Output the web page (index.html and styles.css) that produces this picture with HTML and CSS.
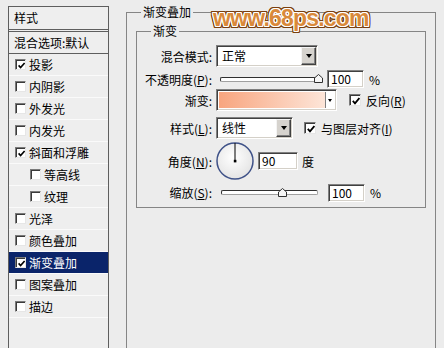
FILE: index.html
```html
<!DOCTYPE html>
<html lang="zh-CN">
<head>
<meta charset="utf-8">
<title>图层样式</title>
<link rel="stylesheet" href="styles.css">
</head>
<body>
<div class="dialog">
  <div class="styles-list">
    <div class="list-head">样式</div>
    <div class="list-blend">混合选项:默认</div>
    <div class="item"><span class="cb"><svg width="7" height="7" viewBox="0 0 7 7"><path d="M0.6 3.4 L2.6 5.6 L6.6 1" fill="none" stroke="#000" stroke-width="1.6"/></svg></span>投影</div>
    <div class="item"><span class="cb"></span>内阴影</div>
    <div class="item"><span class="cb"></span>外发光</div>
    <div class="item"><span class="cb"></span>内发光</div>
    <div class="item"><span class="cb"><svg width="7" height="7" viewBox="0 0 7 7"><path d="M0.6 3.4 L2.6 5.6 L6.6 1" fill="none" stroke="#000" stroke-width="1.6"/></svg></span>斜面和浮雕</div>
    <div class="item sub"><span class="cb"></span>等高线</div>
    <div class="item sub"><span class="cb"></span>纹理</div>
    <div class="item"><span class="cb"></span>光泽</div>
    <div class="item"><span class="cb"></span>颜色叠加</div>
    <div class="item sel"><span class="cb"><svg width="7" height="7" viewBox="0 0 7 7"><path d="M0.6 3.4 L2.6 5.6 L6.6 1" fill="none" stroke="#000" stroke-width="1.6"/></svg></span>渐变叠加</div>
    <div class="item"><span class="cb"></span>图案叠加</div>
    <div class="item"><span class="cb"></span>描边</div>
  </div>

  <fieldset class="outer">
    <legend>渐变叠加</legend>
    <fieldset class="inner">
      <legend>渐变</legend>

      <div class="row r1">
        <span class="lbl">混合模式:</span>
        <div class="select sel-blend"><span class="sel-text">正常</span><span class="sel-btn"><span class="tri"></span></span></div>
      </div>

      <div class="row r2">
        <span class="lbl">不透明度(<u>P</u>):</span>
        <div class="slider sl-opacity">
          <div class="track"></div>
          <svg class="thumb" style="left:94px" width="9" height="9" viewBox="0 0 9 9"><path d="M0.5 8.5 V4 L4.5 0.5 L8.5 4 V8.5 Z" fill="#f6f6f6" stroke="#303030"/></svg>
        </div>
        <div class="num num-opacity">100</div>
        <span class="unit">%</span>
      </div>

      <div class="row r3">
        <span class="lbl">渐变:</span>
        <div class="grad"><div class="grad-fill"></div><div class="grad-arrow"><span class="tri small"></span></div></div>
        <span class="cbx cbx-rev"><svg width="8" height="8" viewBox="0 0 8 8"><path d="M0.8 3.8 L3 6.4 L7.4 1" fill="none" stroke="#000" stroke-width="1.8"/></svg></span>
        <span class="cb-label">反向(<u>R</u>)</span>
      </div>

      <div class="row r4">
        <span class="lbl">样式(<u>L</u>):</span>
        <div class="select sel-style"><span class="sel-text">线性</span><span class="sel-btn"><span class="tri"></span></span></div>
        <span class="cbx cbx-align"><svg width="8" height="8" viewBox="0 0 8 8"><path d="M0.8 3.8 L3 6.4 L7.4 1" fill="none" stroke="#000" stroke-width="1.8"/></svg></span>
        <span class="cb-label">与图层对齐(<u>I</u>)</span>
      </div>

      <div class="row r5">
        <span class="lbl">角度(<u>N</u>):</span>
        <svg class="dial" width="38" height="40" viewBox="0 0 38 40">
          <defs>
            <radialGradient id="dialfill" cx="45%" cy="40%" r="65%">
              <stop offset="0" stop-color="#ffffff"/>
              <stop offset="1" stop-color="#e2e2e2"/>
            </radialGradient>
          </defs>
          <circle cx="19" cy="20" r="18" fill="url(#dialfill)" stroke="#3f5288" stroke-width="1.5"/>
          <line x1="19" y1="20" x2="19" y2="2" stroke="#000" stroke-width="1"/>
          <rect x="17.8" y="18.8" width="2.6" height="2.6" fill="#000"/>
        </svg>
        <div class="num num-angle">90</div>
        <span class="unit deg">度</span>
      </div>

      <div class="row r6">
        <span class="lbl">缩放(<u>S</u>):</span>
        <div class="slider sl-scale">
          <div class="track"></div>
          <svg class="thumb" style="left:57px" width="9" height="9" viewBox="0 0 9 9"><path d="M0.5 8.5 V4 L4.5 0.5 L8.5 4 V8.5 Z" fill="#f6f6f6" stroke="#303030"/></svg>
        </div>
        <div class="num num-scale">100</div>
        <span class="unit">%</span>
      </div>
    </fieldset>
  </fieldset>
</div>
<div class="watermark">www.68ps.com</div>
</body>
</html>
```

FILE: styles.css
```css
* { box-sizing: border-box; }
html, body { margin: 0; padding: 0; }
body {
  width: 444px;
  height: 348px;
  overflow: hidden;
  position: relative;
  background: #ececec;
  font-family: "Noto Sans CJK SC", "Noto Sans", sans-serif;
  font-size: 12px;
  color: #000;
}
u { text-decoration: underline; text-underline-offset: 1px; }

.dialog { display: flex; align-items: flex-start; }

/* left list */
.styles-list {
  flex: none;
  width: 101px;
  height: 342px;
  margin: 6px 0 0 8px;
  border: 1px solid #5e5e5e;
  border-bottom: none;
  background: #eeeeee;
}
.list-head {
  height: 23px;
  line-height: 22px;
  padding-left: 5px;
  border-bottom: 1px solid #5e5e5e;
}
.list-blend {
  margin-top: 1px;
  height: 23px;
  line-height: 21px;
  padding-left: 5px;
  border-top: 1px solid #5e5e5e;
  border-bottom: 1px solid #5e5e5e;
}
.item {
  height: 22px;
  display: flex;
  align-items: center;
  padding-left: 6px;
  border-bottom: 1px solid #fafafa;
  white-space: nowrap;
}
.item.sub { padding-left: 21px; }
.item.sel { background: #0a246a; color: #fff; }
.cb {
  flex: none;
  width: 11px;
  height: 11px;
  margin-right: 3px;
  background: #fff;
  border: 1px solid;
  border-color: #7a7a7a #e6e6e6 #e6e6e6 #7a7a7a;
  box-shadow: inset 1px 1px #3a3a3a;
  display: flex;
  align-items: center;
  justify-content: center;
}
.cb svg { display: block; margin: 1px 0 0 1px; }

/* right group boxes */
fieldset { margin: 0; min-inline-size: 0; }
.outer {
  flex: none;
  margin: 4px 0 0 17px;
  width: 310px;
  height: 344px;
  border: 1px solid #858585;
  border-bottom: none;
  padding: 0 9px;
}
.outer > legend {
  margin-left: 5px;
  padding: 0 2px;
  line-height: 16px;
}
.inner {
  margin-top: 4px;
  width: 290px;
  border: 1px solid #858585;
  padding: 7px 0 5px 0;
}
.inner > legend {
  margin-left: 14px;
  padding: 0 2px;
  line-height: 14px;
}

.row { display: flex; align-items: center; white-space: nowrap; }
.lbl { flex: none; width: 75px; text-align: right; }
.r1 { height: 22px; }
.r2 { height: 18px; margin-top: 3px; }
.r3 { height: 22px; margin-top: 1px; }
.r4 { height: 22px; margin-top: 6px; }
.r5 { height: 40px; margin-top: 2px; }
.r6 { height: 19px; margin-top: 2px; }

/* sunken field */
.select, .num, .grad {
  background: #fff;
  border: 1px solid;
  border-color: #808080 #ffffff #ffffff #808080;
  box-shadow: inset 1px 1px #404040, inset -1px -1px #d4d0c8;
}
.select {
  flex: none;
  display: flex;
  height: 22px;
  padding: 1px;
  margin-left: 4px;
}
.sel-blend { width: 102px; }
.sel-style { width: 77px; }
.sel-text { flex: 1; padding-left: 4px; line-height: 18px; }
.sel-btn {
  flex: none;
  width: 15px;
  height: 18px;
  background: #d6d3ce;
  border: 1px solid;
  border-color: #f4f4f4 #404040 #404040 #f4f4f4;
  box-shadow: inset -1px -1px #808080;
  display: flex;
  align-items: center;
  justify-content: center;
}
.tri {
  width: 0; height: 0;
  border-left: 3.5px solid transparent;
  border-right: 3.5px solid transparent;
  border-top: 4px solid #000;
}
.tri.small {
  border-left-width: 2.5px;
  border-right-width: 2.5px;
  border-top-width: 3px;
}

.slider {
  flex: none;
  position: relative;
  height: 18px;
  display: flex;
  align-items: center;
}
.sl-opacity { width: 99px; margin-left: 8px; }
.sl-scale { width: 97px; margin-left: 9px; }
.track {
  width: 100%;
  height: 5px;
  background: #fff;
  border: 1px solid;
  border-color: #303030 #a0a0a0 #a0a0a0 #303030;
  border-radius: 2px;
}
.thumb { position: absolute; top: 4px; display: block; }

.num {
  flex: none;
  height: 18px;
  padding-left: 3px;
  line-height: 16px;
}
.num-opacity { width: 37px; margin-left: 8px; }
.num-scale { width: 37px; margin-left: 10px; }
.num-angle { width: 40px; margin-left: 4px; }
.unit { margin-left: 5px; }
.unit.deg { margin-left: 4px; }

.grad {
  flex: none;
  display: flex;
  width: 121px;
  height: 22px;
  padding: 2px;
  margin-left: 4px;
}
.grad-fill { flex: 1; background: linear-gradient(90deg, #f8a57f, #fde5d8); }
.grad-arrow {
  flex: none;
  width: 9px;
  border-left: 1px solid #808080;
  background: #fff;
  display: flex;
  align-items: center;
  justify-content: center;
}

.cbx {
  flex: none;
  width: 12px;
  height: 12px;
  background: #fff;
  border: 1px solid;
  border-color: #7a7a7a #e6e6e6 #e6e6e6 #7a7a7a;
  box-shadow: inset 1px 1px #3a3a3a;
  display: flex;
  align-items: center;
  justify-content: center;
}
.cbx svg { display: block; margin: 1px 0 0 1px; }
.cbx-rev { margin-left: 12px; }
.cbx-align { margin-left: 11px; }
.cb-label { margin-left: 5px; }

.dial { flex: none; margin-left: 4px; display: block; }

/* watermark overlay */
.watermark {
  position: absolute;
  left: 213px;
  top: 5px;
  font-family: "Liberation Sans", Arial, sans-serif;
  font-weight: bold;
  font-size: 23px;
  letter-spacing: -0.8px;
  line-height: 27px;
  color: #d9893a;
  text-shadow:
    1px 0 #fff, -1px 0 #fff, 0 1px #fff, 0 -1px #fff,
    1px 1px #fff, -1px -1px #fff, 1px -1px #fff, -1px 1px #fff,
    2px 0 #7a3f0e, -2px 0 #7a3f0e, 0 2px #7a3f0e, 0 -2px #7a3f0e,
    2px 2px #7a3f0e, -2px -2px #7a3f0e, 2px -2px #7a3f0e, -2px 2px #7a3f0e,
    2px 1px #7a3f0e, -2px 1px #7a3f0e, 2px -1px #7a3f0e, -2px -1px #7a3f0e,
    1px 2px #7a3f0e, -1px 2px #7a3f0e, 1px -2px #7a3f0e, -1px -2px #7a3f0e;
}
```
